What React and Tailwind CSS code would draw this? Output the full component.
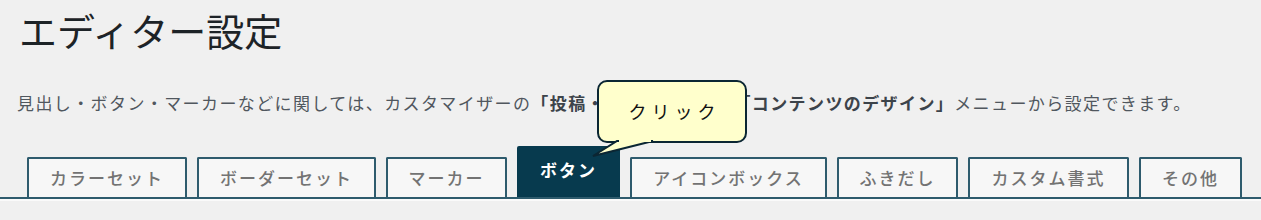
const tabs = [
    { label: "カラーセット", w: "w-[160px]" },
    { label: "ボーダーセット", w: "w-[179px]" },
    { label: "マーカー", w: "w-[121px]" },
    { label: "ボタン", w: "w-[103px]", active: true },
    { label: "アイコンボックス", w: "w-[197px]" },
    { label: "ふきだし", w: "w-[121px]" },
    { label: "カスタム書式", w: "w-[161px]" },
    { label: "その他", w: "w-[103px]" },
];

const Bubble = () => (
    <div className="absolute left-[597px] top-[80px] w-[150px] h-[63px]">
        <div className="w-full h-full rounded-[10px] border-2 border-[#0b2633] bg-[#ffffcc] flex items-center justify-center">
            <span className="text-[18px] tracking-[5px] pl-[5px] text-[#111] font-['Noto_Sans_CJK_JP',sans-serif]">クリック</span>
        </div>
        <svg className="absolute left-[-6px] top-[59px]" width="70" height="20" viewBox="0 0 70 20">
            <polygon points="26,2 62,2 2,17" fill="#ffffcc" stroke="#0b2633" strokeWidth="2" strokeLinejoin="miter" />
            <rect x="28" y="0" width="32" height="3" fill="#ffffcc" />
        </svg>
    </div>
);

const App = () => {
    return (
        <div className="relative w-[1261px] h-[220px] overflow-hidden bg-[#f0f0f0] font-['Noto_Sans_CJK_JP',sans-serif]">
            <h1 className="pl-[19px] pt-[6px] text-[38px] leading-[48px] font-normal text-[#1d2327]">エディター設定</h1>

            <p className="pl-[17px] mt-[37px] text-[17px] leading-[24px] tracking-[1.4px] text-[#50575e]">
                見出し・ボタン・マーカーなどに関しては、カスタマイザーの
                <b className="font-bold text-[#3c434a]">「投稿・固定ページ」＞「コンテンツのデザイン」</b>
                メニューから設定できます。
            </p>

            <div className="mt-[31px] flex items-end gap-[10px] pl-[27px] h-[53px] border-b-2 border-[#2e5b6d]">
                {tabs.map((tab, i) => (
                    tab.active ? (
                        <div key={i} className={`${tab.w} h-[51px] pb-[4px] rounded-t-[2px] bg-[#073a4e] text-white font-bold text-[17px] tracking-[2px] flex items-center justify-center`}>
                            {tab.label}
                        </div>
                    ) : (
                        <div key={i} className={`${tab.w} h-[40px] rounded-t-[2px] border-2 border-b-0 border-[#2e5b6d] bg-[#f7f7f7] text-[#737373] font-medium text-[17px] tracking-[2px] flex items-center justify-center`}>
                            {tab.label}
                        </div>
                    )
                ))}
            </div>
            <div className="h-[2px] bg-[#fafafa]"></div>

            <Bubble />
        </div>
    );
};

export default App;
